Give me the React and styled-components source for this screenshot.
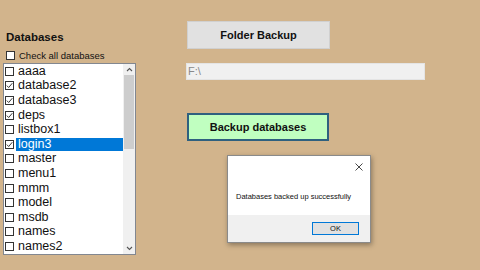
import * as React from 'react'
import styled, { createGlobalStyle } from 'styled-components'

const databases = [
    { name: 'aaaa', checked: false },
    { name: 'database2', checked: true },
    { name: 'database3', checked: true },
    { name: 'deps', checked: true },
    { name: 'listbox1', checked: false },
    { name: 'login3', checked: true, selected: true },
    { name: 'master', checked: false },
    { name: 'menu1', checked: false },
    { name: 'mmm', checked: false },
    { name: 'model', checked: false },
    { name: 'msdb', checked: false },
    { name: 'names', checked: false },
    { name: 'names2', checked: false },
]

const GlobalStyle = createGlobalStyle`
    html, body {
        margin: 0;
        padding: 0;
        background: #d2b48c;
        font-family: "Liberation Sans", Arial, sans-serif;
    }
`

// HTML Elements
const CheckBox = ({ checked }) => (
    <StyledBox>
        {checked && (
            <svg width="7" height="7" viewBox="0 0 7 7">
                <path d="M0.8 3.6 L2.7 5.5 L6.3 1.2" fill="none" stroke="#222" strokeWidth="0.9" />
            </svg>
        )}
    </StyledBox>
)

const Item = ({ item }) => (
    <StyledItem>
        <CheckBox checked={item.checked} />
        <StyledItemLabel selected={item.selected}>{item.name}</StyledItemLabel>
    </StyledItem>
)

const Arrow = ({ up }) => (
    <svg width="7" height="5" viewBox="0 0 7 5">
        <path d={up ? 'M1 4 L3.5 1.5 L6 4' : 'M1 1 L3.5 3.5 L6 1'} fill="none" stroke="#555" strokeWidth="1.1" />
    </svg>
)

const ScrollBar = () => (
    <StyledScrollBar>
        <StyledArrowCell><Arrow up /></StyledArrowCell>
        <StyledTrack>
            <StyledThumb />
        </StyledTrack>
        <StyledArrowCell><Arrow /></StyledArrowCell>
    </StyledScrollBar>
)

const MessageBox = () => (
    <StyledDialog>
        <StyledDialogBody>
            <StyledClose>
                <svg width="8" height="8" viewBox="0 0 8 8">
                    <path d="M0.5 0.5 L7.5 7.5 M7.5 0.5 L0.5 7.5" stroke="#333" strokeWidth="0.9" />
                </svg>
            </StyledClose>
            <StyledMessage>Databases backed up successfully</StyledMessage>
        </StyledDialogBody>
        <StyledDialogFooter>
            <StyledOkButton type="button">OK</StyledOkButton>
        </StyledDialogFooter>
    </StyledDialog>
)

// Styled Components
const StyledPage = styled.div`
    position: relative;
    width: 480px;
    height: 270px;
    display: grid;
    grid-template-columns: 137px 1fr;
    overflow: hidden;
`

const StyledLeftPane = styled.div`
    display: flex;
    flex-direction: column;
    padding: 30px 0 0 3px;
`

const StyledHeading = styled.div`
    font-size: 11.5px;
    font-weight: bold;
    color: #111;
    line-height: 14px;
    padding-left: 3px;
`

const StyledCheckAll = styled.label`
    display: flex;
    align-items: center;
    gap: 4px;
    height: 14px;
    margin-top: 4px;
    padding-left: 3px;
    font-size: 9.5px;
    color: #111;
`

const StyledListBox = styled.div`
    display: flex;
    width: 133px;
    height: 192px;
    margin-top: 1px;
    box-sizing: border-box;
    border: 1px solid #828790;
    background: #fff;
`

const StyledList = styled.ul`
    flex: 1;
    margin: 0;
    padding: 0 0 0 1px;
    list-style: none;
`

const StyledItem = styled.li`
    display: flex;
    align-items: center;
    height: 14.6px;
    gap: 2px;
`

const StyledBox = styled.span`
    width: 9px;
    height: 9px;
    box-sizing: border-box;
    border: 1px solid #333;
    background: #fff;
    display: flex;
    align-items: center;
    justify-content: center;
    flex: none;
`

const StyledItemLabel = styled.span`
    flex: 1;
    height: 13px;
    line-height: 13px;
    padding-left: 2px;
    font-size: 12.5px;
    color: ${(props) => (props.selected ? '#fff' : '#111')};
    background: ${(props) => (props.selected ? '#0078d7' : 'transparent')};
`

const StyledScrollBar = styled.div`
    width: 12px;
    display: flex;
    flex-direction: column;
    background: #f0f0f0;
`

const StyledArrowCell = styled.div`
    height: 11px;
    display: flex;
    align-items: center;
    justify-content: center;
`

const StyledTrack = styled.div`
    flex: 1;
    padding: 0 1px;
`

const StyledThumb = styled.div`
    height: 74px;
    background: #cdcdcd;
`

const StyledRightPane = styled.div`
    display: flex;
    flex-direction: column;
    align-items: flex-start;
    padding: 21px 0 0 50px;
`

const StyledButton = styled.button`
    width: 143px;
    height: 28px;
    box-sizing: border-box;
    font-family: "Liberation Sans", Arial, sans-serif;
    font-size: 11px;
    font-weight: bold;
    color: #111;
    padding: 0;
`

const StyledFolderButton = styled(StyledButton)`
    background: #e1e1e1;
    border: 1px solid #d0d0d0;
`

const StyledBackupButton = styled(StyledButton)`
    margin-top: 33px;
    width: 142px;
    background: #c0ffc0;
    border: 2px solid #2f607f;
`

const StyledPathInput = styled.div`
    margin-top: 14px;
    margin-left: -1px;
    width: 239px;
    height: 17px;
    box-sizing: border-box;
    border: 1px solid #e4e4e4;
    background: #f0f0f0;
    padding-left: 1px;
    font-size: 11px;
    line-height: 15px;
    color: #8a8a8a;
`

const StyledDialog = styled.div`
    position: absolute;
    left: 227px;
    top: 155px;
    width: 144px;
    height: 88px;
    box-sizing: border-box;
    border: 1px solid #8a8a8a;
    box-shadow: 1px 2px 5px rgba(0, 0, 0, 0.35);
    display: flex;
    flex-direction: column;
    background: #fff;
`

const StyledDialogBody = styled.div`
    position: relative;
    height: 59px;
    display: flex;
    align-items: flex-end;
    padding: 0 0 14px 8px;
    box-sizing: border-box;
`

const StyledClose = styled.div`
    position: absolute;
    top: 7px;
    right: 7px;
    display: flex;
`

const StyledMessage = styled.div`
    font-size: 7.5px;
    color: #111;
`

const StyledDialogFooter = styled.div`
    flex: 1;
    background: #f0f0f0;
    display: flex;
    align-items: flex-start;
    justify-content: flex-end;
    padding: 7px 11px 0 0;
`

const StyledOkButton = styled.button`
    width: 47px;
    height: 13px;
    box-sizing: border-box;
    border: 1px solid #0078d7;
    background: #e1e1e1;
    font-family: "Liberation Sans", Arial, sans-serif;
    font-size: 7.5px;
    color: #111;
    padding: 0;
`

const App = () => {
    return (
        <StyledPage>
            <GlobalStyle />
            <StyledLeftPane>
                <StyledHeading>Databases</StyledHeading>
                <StyledCheckAll>
                    <CheckBox checked={false} />
                    Check all databases
                </StyledCheckAll>
                <StyledListBox>
                    <StyledList>
                        {databases.map((item) => (
                            <Item key={item.name} item={item} />
                        ))}
                    </StyledList>
                    <ScrollBar />
                </StyledListBox>
            </StyledLeftPane>
            <StyledRightPane>
                <StyledFolderButton type="button">Folder Backup</StyledFolderButton>
                <StyledPathInput>F:\</StyledPathInput>
                <StyledBackupButton type="button">Backup databases</StyledBackupButton>
            </StyledRightPane>
            <MessageBox />
        </StyledPage>
    )
}

export default App
